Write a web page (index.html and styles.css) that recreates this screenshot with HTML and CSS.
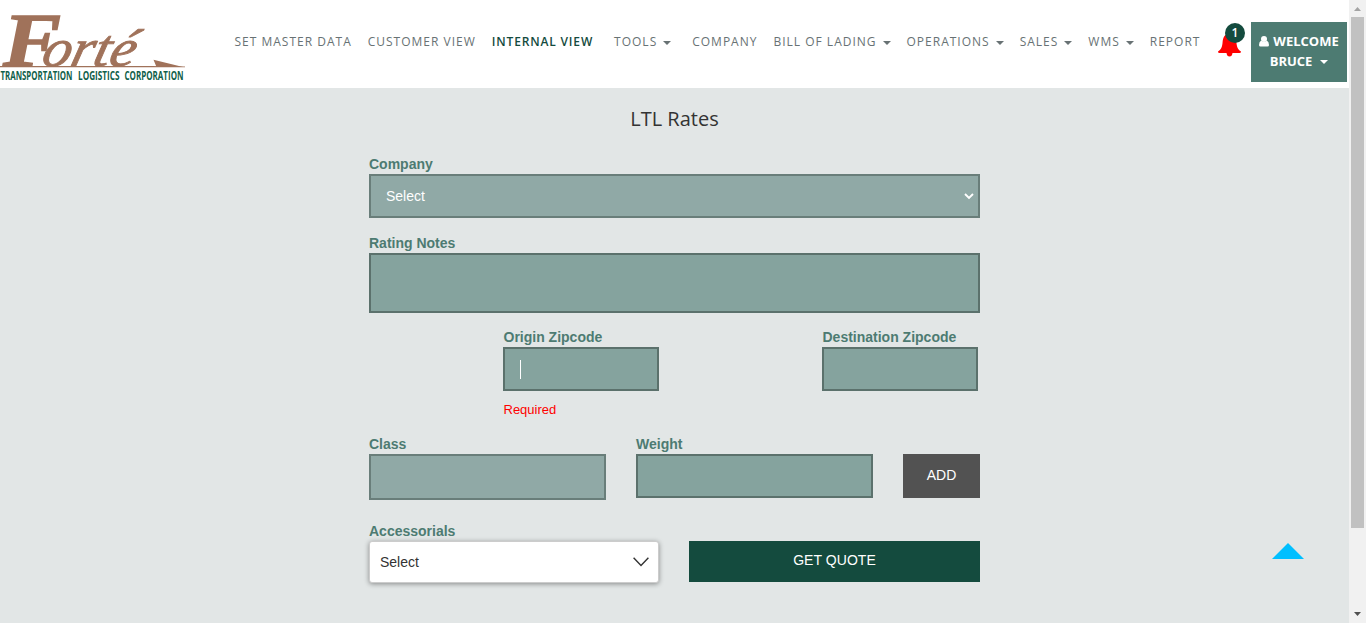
FILE: index.html
```
<!DOCTYPE html>
<html lang="en">
<head>
<meta charset="utf-8">
<title>LTL Rates</title>
<link rel="stylesheet" href="styles.css">
</head>
<body>
<div class="shell">
  <div class="page">
    <header class="header">
      <svg class="logo" width="190" height="88" viewBox="0 0 190 88">
        <g class="logo-name">
          <text class="logo-initial" x="3" y="66" textLength="58" lengthAdjust="spacingAndGlyphs">F</text>
          <text class="logo-rest" transform="translate(40 66) skewX(-14)" x="0" y="0" textLength="93" lengthAdjust="spacingAndGlyphs">orté</text>
          <path d="M0 66H152L185 66.6V67.3H0Z"/>
          <path d="M153.5 59.8L183 67H156.5Z"/>
        </g>
        <g class="logo-tag">
          <text x="0.5" y="79.500" textLength="72" lengthAdjust="spacingAndGlyphs">TRANSPORTATION</text>
          <text x="78" y="79.500" textLength="41.500" lengthAdjust="spacingAndGlyphs">LOGISTICS</text>
          <text x="124.500" y="79.500" textLength="59" lengthAdjust="spacingAndGlyphs">CORPORATION</text>
        </g>
      </svg>
      <nav class="nav">
        <a>SET MASTER DATA</a>
        <a>CUSTOMER VIEW</a>
        <a class="active">INTERNAL VIEW</a>
        <a class="tools">TOOLS<i class="caret"></i></a>
        <a>COMPANY</a>
        <a>BILL OF LADING<i class="caret"></i></a>
        <a>OPERATIONS<i class="caret"></i></a>
        <a>SALES<i class="caret"></i></a>
        <a>WMS<i class="caret"></i></a>
        <a>REPORT</a>
      </nav>
      <div class="alerts">
        <svg width="23" height="24" viewBox="0 0 23 24"><path fill="#f00" d="M11.5 0C7 1 5 4 4.600 9C4.300 14 3 16.500 0 18.500Q0 20 1.500 20H8.500Q9 23.500 11.500 23.500T14.500 20H21.500Q23 20 23 18.500C20 16.500 18.700 14 18.400 9C18 4 16 1 11.500 0Z"/></svg>
        <span class="badge">1</span>
      </div>
      <div class="user">
        <div class="user-line"><svg width="10" height="11" viewBox="0 0 10 11"><circle cx="5" cy="3" r="3" fill="#fff"/><path fill="#fff" d="M2.200 4.500Q5 7 7.800 4.500Q10 5.500 10 9Q10 10.500 8.500 10.500H1.500Q0 10.500 0 9Q0 5.500 2.200 4.500Z"/></svg>WELCOME</div>
        <div class="user-line">BRUCE<i class="caret"></i></div>
      </div>
    </header>
    <main class="main">
      <h1 class="title">LTL Rates</h1>
      <form class="form">
        <div class="field company"><label>Company</label>
          <div class="box select">Select<svg width="10" height="7" viewBox="0 0 10 7"><path d="M1 1L5 5L9 1" fill="none" stroke="#fff" stroke-width="1.9"/></svg></div>
        </div>
        <div class="field notes"><label>Rating Notes</label><div class="box tall"></div></div>
        <div class="row zips">
          <div class="field zip"><label>Origin Zipcode</label><div class="box"><span class="cursor"></span></div><span class="error">Required</span></div>
          <div class="field zip"><label>Destination Zipcode</label><div class="box"></div></div>
        </div>
        <div class="row items">
          <div class="field item"><label>Class</label><div class="box light"></div></div>
          <div class="field item"><label>Weight</label><div class="box"></div></div>
          <div class="btn add">ADD</div>
        </div>
        <div class="row actions">
          <div class="field extras"><label>Accessorials</label>
            <div class="dropdown">Select<svg width="16" height="10" viewBox="0 0 16 10"><path d="M.6 .8L8 8.600L15.400 .8" fill="none" stroke="#333" stroke-width="1.400"/></svg></div>
          </div>
          <div class="btn quote">GET QUOTE</div>
        </div>
      </form>
      <svg class="to-top" width="32" height="16" viewBox="0 0 32 16"><path d="M16 0L32 16H0Z" fill="#00bfff"/></svg>
    </main>
  </div>
  <div class="scrollbar">
    <svg width="17" height="17" viewBox="0 0 17 17"><path d="M8.500 7L12 11H5Z" fill="#a3a3a3"/></svg>
    <div class="thumb"></div>
    <svg class="down" width="17" height="17" viewBox="0 0 17 17"><path d="M5 6H12L8.500 10Z" fill="#505050"/></svg>
  </div>
</div>
</body>
</html>
```
FILE: styles.css
```
* { box-sizing: border-box; }
body { margin: 0; font: 14px/20px "Liberation Sans", Arial, sans-serif; overflow: hidden; }
.shell { display: flex; height: 623px; }
.page { width: 1349px; display: flex; flex-direction: column; }
.header { height: 88px; background: #fff; display: flex; flex: none; font-family: "Open Sans", sans-serif; }
.logo { flex: none; display: block; overflow: visible; }
.logo-name { fill: #a0725a; font-family: "Liberation Serif", serif; font-style: italic; }
.logo-initial { font-size: 77px; font-weight: bold; stroke: #a0725a; stroke-width: 1.5px; }
.logo-rest { font-size: 53px; stroke: #a0725a; stroke-width: .9px; }
.logo-tag { fill: #10604a; font: bold 12.800px "Open Sans", sans-serif; }
.nav { width: 1028px; flex: none; padding: 32px 0 0 44.500px; display: flex; gap: 16px; font-size: 12px; letter-spacing: 1px; color: #687274; white-space: nowrap; }
.nav a { display: flex; align-items: center; height: 20px; }
.nav .active { color: #144b3e; font-weight: 600; letter-spacing: .84px; }
.nav .tools { margin: 0 5px 0 5px; }
.caret { border: 4px solid transparent; border-top-color: currentColor; border-bottom: 0; margin: 2px 0 0 6px; }
.alerts { position: relative; width: 33px; padding-top: 33px; flex: none; }
.badge { position: absolute; left: 7px; top: 23px; width: 20px; height: 20px; border-radius: 50%; background: #144b3e; color: #fff; font-size: 12px; font-weight: 600; text-align: center; }
.user { width: 96px; height: 60px; margin-top: 22px; padding-top: 9px; background: #4d7b72; color: #fff; font-size: 13px; font-weight: 700; }
.user-line { display: flex; justify-content: center; align-items: center; height: 20px; }
.user-line svg { margin-right: 4px; }
.user-line .caret { margin: 1px 0 0 8px; }
.main { position: relative; flex: 1; background: #e2e6e6; }
.title { margin: 0; padding-top: 18px; height: 66px; font: 400 20px/26px "Open Sans", sans-serif; color: #333; text-align: center; }
.form { width: 611px; margin-left: 369px; }
.field label { display: block; height: 20px; color: #4d7b72; font-weight: bold; }
.box { height: 44px; border: 2px solid #5b716c; background: #85a39e; }
.box.tall { height: 60px; }
.box.select, .box.light { border-color: #697e7a; background: #90a9a6; }
.box.light { height: 46px; }
.box.select { color: #fff; display: flex; align-items: center; justify-content: space-between; padding: 0 4px 0 15px; }
.company { height: 79px; }
.notes { height: 94px; }
.row { display: flex; }
.zips { height: 107px; padding-left: 134px; gap: 163px; }
.zip { width: 156px; }
.zip label, .error { padding-left: .5px; }
.cursor { display: block; width: 1px; height: 19px; margin: 11px 0 0 15px; background: #fff; }
.error { display: block; margin-top: 9px; color: #f00; font-size: 13px; }
.items { height: 87px; gap: 30px; }
.item { width: 237px; }
.btn { color: #fff; display: flex; justify-content: center; }
.add { width: 77px; height: 44px; margin-top: 20px; padding-top: 11px; background: #525252; }
.actions { gap: 30px; }
.extras { width: 290px; }
.dropdown { height: 42px; border: 1px solid #ccc; border-radius: 3px; background: #fff; box-shadow: 0 1px 5px rgba(0,0,0,.4); color: #333; display: flex; align-items: center; justify-content: space-between; padding: 0 9px 0 10px; }
.quote { width: 291px; height: 41px; margin-top: 20px; padding-top: 9px; background: #144b3e; letter-spacing: .05px; }
.to-top { position: absolute; right: 45px; top: 455px; }
.scrollbar { width: 17px; background: #f1f1f1; display: flex; flex-direction: column; }
.thumb { width: 13px; height: 511px; margin-left: 2px; background: #c1c1c1; }
.down { margin-top: auto; }
```
